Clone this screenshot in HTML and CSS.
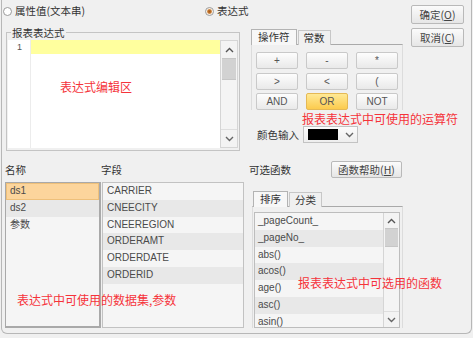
FILE: index.html
```html
<!DOCTYPE html>
<html>
<head>
<meta charset="utf-8">
<link rel="stylesheet" href="styles.css">
</head>
<body>
<div class="win">
  <div class="top">
    <div class="lcol">
      <div class="radios">
        <label class="radio r1"><span class="dot"></span>属性值(文本串)</label>
        <label class="radio"><span class="dot on"></span>表达式</label>
      </div>
      <div class="fs">
        <span class="legend">报表表达式</span>
        <div class="editor">
          <div class="gutter">1</div>
          <div class="code">
            <div class="curline"></div>
            <div class="note note-edit">表达式编辑区</div>
          </div>
          <div class="vscroll">
            <div class="sbtn"><svg width="9" height="6" viewBox="0 0 9 6"><polyline points="1,5 4.5,1.5 8,5" fill="none" stroke="#555" stroke-width="1.4"/></svg></div>
            <div class="thumb"></div>
            <div class="track"></div>
            <div class="sbtn"><svg width="9" height="6" viewBox="0 0 9 6"><polyline points="1,1 4.5,4.5 8,1" fill="none" stroke="#666" stroke-width="1.4"/></svg></div>
          </div>
        </div>
      </div>
    </div>
    <div class="mcol">
      <div class="tabs">
        <span class="tab active">操作符</span><span class="tab">常数</span>
      </div>
      <div class="panel">
        <div class="ops">
          <button class="op">+</button>
          <button class="op">-</button>
          <button class="op">*</button>
          <button class="op">&gt;</button>
          <button class="op">&lt;</button>
          <button class="op">(</button>
          <button class="op">AND</button>
          <button class="op op-hot">OR</button>
          <button class="op">NOT</button>
        </div>
      </div>
      <div class="note note-ops">报表表达式中可使用的运算符</div>
      <div class="color-row">
        <span class="clabel">颜色输入</span>
        <div class="cselect">
          <span class="swatch"></span>
          <svg width="9" height="6" viewBox="0 0 9 6"><polyline points="1,1 4.5,4.5 8,1" fill="none" stroke="#666" stroke-width="1.4"/></svg>
        </div>
      </div>
    </div>
    <div class="rcol">
      <button class="btn">确定(<u>O</u>)</button>
      <button class="btn">取消(<u>C</u>)</button>
    </div>
  </div>
  <div class="bot">
    <div class="lbot">
      <div class="labels">
        <span class="lab lab-name">名称</span>
        <span class="lab">字段</span>
      </div>
      <div class="lists">
        <div class="list names">
          <div class="row sel">ds1</div>
          <div class="row alt">ds2</div>
          <div class="row">参数</div>
        </div>
        <div class="list fields">
          <div class="row">CARRIER</div>
          <div class="row alt">CNEECITY</div>
          <div class="row">CNEEREGION</div>
          <div class="row alt">ORDERAMT</div>
          <div class="row">ORDERDATE</div>
          <div class="row alt">ORDERID</div>
        </div>
        <div class="note note-data">表达式中可使用的数据集,参数</div>
      </div>
    </div>
    <div class="rbot">
      <div class="fhead">
        <span class="flabel">可选函数</span>
        <button class="btn btn-help">函数帮助(<u>H</u>)</button>
      </div>
      <div class="tabs tabs2">
        <span class="tab active">排序</span><span class="tab">分类</span>
      </div>
      <div class="panel panel2">
        <div class="flist">
          <div class="frows">
            <div class="row">_pageCount_</div>
            <div class="row alt">_pageNo_</div>
            <div class="row">abs()</div>
            <div class="row alt">acos()</div>
            <div class="row">age()</div>
            <div class="row alt">asc()</div>
            <div class="row">asin()</div>
          </div>
          <div class="vscroll vs2">
            <div class="sbtn"><svg width="9" height="6" viewBox="0 0 9 6"><polyline points="1,5 4.5,1.5 8,5" fill="none" stroke="#555" stroke-width="1.4"/></svg></div>
            <div class="thumb"></div>
            <div class="track"></div>
            <div class="sbtn"><svg width="9" height="6" viewBox="0 0 9 6"><polyline points="1,1 4.5,4.5 8,1" fill="none" stroke="#666" stroke-width="1.4"/></svg></div>
          </div>
          <div class="note note-fn">报表表达式中可选用的函数</div>
        </div>
      </div>
    </div>
  </div>
  <div class="grip">•••••</div>
</div>
</body>
</html>
```
FILE: styles.css
```css
html, body {
  margin: 0;
  background: #f0f0f0;
}
body {
  font-family: "Noto Sans CJK SC", "Liberation Sans", sans-serif;
  font-size: 10.5px;
  color: #333;
}
.win {
  position: relative;
  box-sizing: border-box;
  width: 471px;
  height: 334px;
  margin-left: 1px;
  border: 1px solid #b7b7b7;
  border-top: 0;
  border-radius: 0 0 6px 6px;
  display: flex;
  flex-direction: column;
}
.top {
  display: flex;
  height: 156px;
}
.lcol {
  width: 243px;
  flex: none;
}
.radios {
  display: flex;
  margin-top: 4px;
  height: 14px;
  line-height: 14px;
  white-space: nowrap;
}
.radio {
  display: flex;
  align-items: center;
  gap: 3px;
  color: #333;
  flex: none;
}
.r1 {
  width: 202px;
  margin-left: 1px;
}
.dot {
  box-sizing: border-box;
  width: 9px;
  height: 9px;
  border: 1px solid #9a9a9a;
  border-radius: 50%;
  background: #fff;
}
.dot.on {
  background: radial-gradient(circle, #a65a1a 0, #c2762f 1.8px, #f3d9bd 2.6px, #fff 3.4px);
}
.fs {
  box-sizing: border-box;
  width: 234px;
  height: 119px;
  margin: 14px 0 0 4px;
  border: 1px solid #c4c4c4;
}
.legend {
  display: block;
  width: fit-content;
  margin: -7px 0 0 4px;
  padding: 0 1px;
  line-height: 13px;
  background: #f0f0f0;
  color: #333;
}
.editor {
  display: flex;
  height: 108px;
  margin: 1px 1px 0 1px;
}
.gutter {
  width: 23px;
  background: #fff;
  border-right: 1px solid #ececec;
  font-family: "Liberation Sans", sans-serif;
  font-size: 9px;
  color: #555;
  line-height: 14px;
  padding-left: 9px;
  box-sizing: border-box;
}
.code {
  flex: 1;
  background: #fff;
}
.curline {
  height: 14px;
  background: #ffff9e;
}
.note {
  color: #f5333a;
  font-size: 12px;
  line-height: 14px;
  white-space: nowrap;
}
.note-edit {
  margin: 26px 0 0 29px;
}
.vscroll {
  box-sizing: border-box;
  width: 18px;
  display: flex;
  flex-direction: column;
  background: #f4f4f4;
  border: 1px solid #d5d5d5;
}
.sbtn {
  height: 17px;
  display: flex;
  align-items: center;
  justify-content: center;
  background: #f3f3f3;
  flex: none;
}
.thumb {
  height: 22px;
  background: #d2d2d2;
  border-top: 1px solid #c6c6c6;
  border-bottom: 1px solid #c6c6c6;
  box-sizing: border-box;
  margin: 0 1px;
  flex: none;
}
.track {
  flex: 1;
  border-bottom: 1px solid #dedede;
}
.mcol {
  width: 152px;
  margin-left: 6px;
  flex: none;
}
.tabs {
  display: flex;
  align-items: flex-end;
  height: 16px;
  margin-top: 29px;
  position: relative;
  z-index: 1;
}
.tab {
  box-sizing: border-box;
  height: 15px;
  line-height: 13px;
  padding: 0 5px;
  border: 1px solid #c7c7c7;
  border-bottom: 0;
  background: #f0f0f0;
  color: #333;
  margin-left: 1px;
}
.tab.active {
  height: 16px;
  margin-left: 0;
  padding: 0 6px;
  border-color: #b3b3b3;
  background: #f7f7f7;
}
.panel {
  box-sizing: border-box;
  margin-top: -1px;
  border-top: 1px solid #a9a9a9;
  border-left: 1px solid #dcdcdc;
  border-right: 1px solid #dcdcdc;
  padding: 7px 0 0 4px;
}
.ops {
  display: grid;
  grid-template-columns: repeat(3, 42px);
  grid-auto-rows: 17px;
  column-gap: 8px;
  row-gap: 3.5px;
}
.op {
  box-sizing: border-box;
  margin: 0;
  padding: 0;
  border: 1px solid #c9c9c9;
  border-radius: 2px;
  background: linear-gradient(#fdfdfd, #e9e9e9);
  font-family: "Liberation Sans", sans-serif;
  font-size: 10px;
  color: #555;
}
.op-hot {
  background: linear-gradient(#ffe995, #fccb4e);
  border-color: #e5b955;
}
.note-ops {
  margin: 2px 0 0 51px;
}
.color-row {
  display: flex;
  align-items: center;
  height: 17px;
}
.clabel {
  width: 46px;
  margin-left: 6px;
  line-height: 14px;
}
.cselect {
  box-sizing: border-box;
  width: 55px;
  height: 17px;
  border: 1px solid #c3c3c3;
  background: linear-gradient(#fcfcfc, #eeeeee);
  display: flex;
  align-items: center;
  gap: 7px;
  padding-left: 4px;
}
.swatch {
  width: 30px;
  height: 11px;
  background: #000;
}
.rcol {
  margin-left: auto;
  margin-right: 7px;
  padding-top: 5px;
  display: flex;
  flex-direction: column;
  gap: 4px;
}
.btn {
  box-sizing: border-box;
  margin: 0;
  padding: 0;
  width: 53px;
  height: 19px;
  border: 1px solid #b9b9b9;
  border-radius: 2px;
  background: linear-gradient(#fbfbfb, #e6e6e6);
  font-family: "Noto Sans CJK SC", "Liberation Sans", sans-serif;
  font-size: 10.5px;
  line-height: 15px;
  color: #444;
}
.btn u {
  text-decoration-thickness: 1px;
}
.bot {
  display: flex;
  flex: 1;
}
.lbot {
  width: 243px;
  flex: none;
}
.labels {
  display: flex;
  margin-top: 7px;
  height: 14px;
  line-height: 14px;
}
.lab-name {
  width: 96px;
  margin-left: 3px;
}
.lists {
  position: relative;
  display: flex;
  gap: 1px;
  margin: 5px 0 0 3px;
  height: 146px;
}
.list {
  box-sizing: border-box;
  background: #f5f5f5;
  border: 1px solid #c2c2c2;
  overflow: hidden;
}
.names {
  width: 96px;
  border-color: #a9a9a9;
  border-width: 1px 2px 2px 1px;
}
.fields {
  width: 142px;
}
.row {
  height: 16.8px;
  line-height: 16.8px;
  padding-left: 4px;
  font-family: "Liberation Sans", "Noto Sans CJK SC", sans-serif;
  font-size: 10px;
  color: #4a4a4a;
  white-space: nowrap;
}
.row.alt {
  background: #e8e8e8;
}
.row.sel {
  background: #fcd59c;
  box-shadow: inset 0 0 0 1px #eec07a;
}
.note-data {
  position: absolute;
  left: 12px;
  top: 111px;
}
.rbot {
  width: 154px;
  margin-left: 4px;
  flex: none;
}
.fhead {
  display: flex;
  align-items: center;
  height: 17px;
  margin-top: 5px;
}
.flabel {
  width: 82px;
  line-height: 14px;
}
.btn-help {
  width: 71px;
  height: 17px;
  line-height: 13px;
}
.tabs2 {
  margin-top: 13px;
  margin-left: 4px;
}
.panel2 {
  margin-left: 3px;
  width: 151px;
  padding: 5px 3px 0 1px;
}
.flist {
  position: relative;
  box-sizing: border-box;
  display: flex;
  width: 146px;
  height: 116px;
  border: 1px solid #bdbdbd;
  background: #f5f5f5;
}
.frows {
  flex: 1;
  overflow: hidden;
}
.frows .row {
  padding-left: 3px;
}
.vs2 {
  width: 16px;
  border-width: 0 0 0 1px;
}
.vs2 .sbtn {
  height: 15px;
}
.vs2 .thumb {
  height: 19px;
}
.note-fn {
  position: absolute;
  left: 43px;
  top: 63px;
}
.grip {
  position: absolute;
  left: 187px;
  bottom: -6px;
  font-size: 6px;
  letter-spacing: 0.5px;
  color: #9a9a9a;
  line-height: 8px;
}
```
